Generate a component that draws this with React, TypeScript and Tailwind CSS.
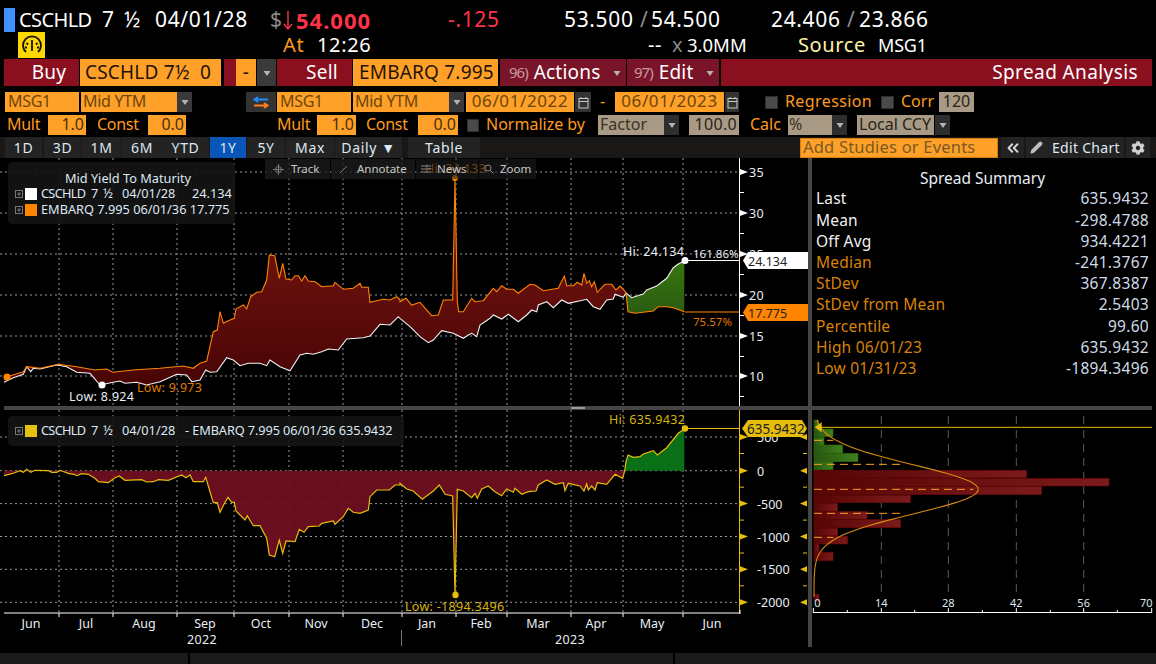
import { ChevronsLeft, Pencil } from "lucide-react"
import { FaCog } from "react-icons/fa"

type Pt = [number, number]

// all series are read off the 3x crops: x = offset + zx / 3, y = top + zy / 3
const toUpper = (pts: number[][], ox: number): Pt[] => pts.map(([x, y]) => [ox + x / 3, 155 + y / 3])
const toLower = (pts: number[][], ox: number): Pt[] => pts.map(([x, y]) => [ox + x / 3, 405 + y / 3])
const line = (pts: Pt[]) => pts.map(([x, y]) => `${x.toFixed(1)},${y.toFixed(1)}`).join(" ")

const ORANGE_RED: Pt[] = [
  ...toUpper([[22,665],[70,650],[80,635],[120,640],[175,628],[230,635],[285,645],[320,642],[338,652],[400,645],[480,640],[550,633],[580,640],[600,625],[620,618],[640,530],[652,525],[660,470],[670,505],[685,497],[703,490],[708,462],[730,450],[740,462],[752,425],[770,412],[785,410],[800,375],[808,300],[824,302],[838,370],[848,325],[858,372],[875,375],[885,362],[895,362],[905,378],[915,362],[925,378],[945,380],[965,395],[1000,392],[1005,382],[1030,403],[1060,400],[1080,385],[1085,397],[1105,397],[1110,442],[1130,437],[1150,433],[1170,435],[1190,425],[1200,435]], 0),
  ...toUpper([[0,440],[18,430],[35,450],[60,442],[95,482],[115,480],[130,435],[158,435],[165,70],[172,440],[176,470],[190,470],[215,430],[225,440],[250,437],[280,400],[290,410],[305,392],[320,403],[340,403],[355,415],[390,388],[405,390],[430,407],[475,400],[493,363],[500,392],[520,392],[532,382],[545,390],[552,355],[560,385],[568,377],[575,395],[583,380],[592,412],[615,388],[635,388],[648,405],[660,393],[672,405],[678,414]], 400),
]
const ORANGE_GREEN: Pt[] = toUpper([[678,414],[684,470],[705,475],[760,468],[775,455],[800,455],[820,458],[853,470]], 400)
const WHITE_RED: Pt[] = [
  ...toUpper([[12,682],[40,668],[70,658],[80,635],[92,650],[100,640],[120,642],[170,630],[200,635],[230,652],[270,655],[300,690],[340,682],[360,678],[375,685],[410,682],[440,690],[480,680],[530,658],[560,660],[575,680],[600,675],[617,645],[630,652],[650,650],[680,608],[700,615],[720,632],[745,625],[780,625],[800,632],[810,615],[840,635],[870,647],[900,600],[920,595],[940,598],[965,590],[985,582],[1015,585],[1040,552],[1090,548],[1110,543],[1140,508],[1170,510],[1195,485]], 0),
  ...toUpper([[0,490],[30,515],[60,545],[85,563],[100,555],[125,527],[160,535],[190,550],[205,540],[215,535],[230,545],[240,510],[270,490],[280,480],[305,492],[325,478],[355,500],[380,480],[395,465],[410,470],[415,450],[440,440],[460,458],[485,435],[505,445],[540,437],[560,433],[580,455],[600,463],[620,435],[640,432],[645,418],[670,427],[678,414]], 400),
]
const WHITE_GREEN: Pt[] = toUpper([[678,414],[695,428],[730,417],[740,405],[770,393],[800,370],[820,338],[835,327],[853,318]], 400)

const SPREAD_RED: Pt[] = [
  ...toLower([[12,212],[40,205],[60,197],[70,202],[80,193],[92,202],[105,196],[145,197],[155,202],[170,202],[180,196],[205,205],[222,208],[230,212],[245,206],[265,208],[285,220],[295,230],[325,233],[345,218],[358,213],[375,226],[425,224],[440,231],[460,230],[475,224],[505,226],[545,210],[558,218],[570,210],[580,230],[610,230],[617,217],[640,293],[652,293],[660,322],[675,292],[684,277],[695,292],[703,292],[708,318],[735,345],[742,332],[760,362],[780,362],[800,400],[808,450],[824,455],[838,405],[848,445],[858,408],[885,410],[898,373],[912,382],[925,365],[958,363],[965,355],[1000,348],[1005,358],[1030,335],[1045,310],[1060,322],[1080,325],[1105,315],[1110,275],[1130,255],[1168,255],[1185,240],[1200,240]], 0),
  ...toLower([[0,235],[20,252],[40,258],[67,283],[100,258],[118,240],[135,268],[158,273],[165,570],[172,253],[190,258],[215,278],[225,265],[232,280],[245,252],[265,243],[285,260],[305,272],[320,252],[340,262],[345,250],[365,268],[385,260],[408,258],[415,240],[440,225],[465,238],[490,233],[495,257],[505,235],[540,243],[552,258],[560,237],[565,255],[575,243],[585,255],[592,233],[620,238],[645,208],[668,220],[674,197]], 400),
]
const SPREAD_GREEN: Pt[] = toLower([[674,197],[678,170],[684,150],[700,157],[720,155],[730,147],[760,137],[772,150],[800,128],[835,85],[853,72]], 400)

const V_GRID = [59, 113, 177, 234, 289, 343, 402, 456, 507, 571, 623, 683]
const UPPER_TICKS = [
  { y: 172, label: "35" },
  { y: 213, label: "30" },
  { y: 254, label: "25" },
  { y: 295, label: "20" },
  { y: 336, label: "15" },
  { y: 376, label: "10" },
]
const LOWER_TICKS = [
  { y: 437, label: "500" },
  { y: 470.7, label: "0" },
  { y: 503.6, label: "-500" },
  { y: 536.5, label: "-1000" },
  { y: 569.3, label: "-1500" },
  { y: 602.3, label: "-2000" },
]
const MONTHS: [string, number][] = [["Jun", 31], ["Jul", 86], ["Aug", 144], ["Sep", 205], ["Oct", 261], ["Nov", 316], ["Dec", 372], ["Jan", 427], ["Feb", 481], ["Mar", 538], ["Apr", 596], ["May", 652], ["Jun", 712]]
const BARS_GREEN = [[55, 45, 70], [99, 72, 95], [72, 97, 120], [128, 120, 144], [174, 145, 170], [99, 171, 194]]
const BARS_RED = [[680, 196, 218], [927, 220, 243], [725, 245, 269], [332, 271, 293], [113, 295, 318], [201, 320, 342], [302, 344, 368], [113, 370, 392], [143, 394, 417], [57, 418, 440], [99, 442, 467], [57, 568, 588]]
const SUMMARY = [
  { label: "Last", value: "635.9432", tone: "text-[#f0f0f0]" },
  { label: "Mean", value: "-298.4788", tone: "text-[#f0f0f0]" },
  { label: "Off Avg", value: "934.4221", tone: "text-[#f0f0f0]" },
  { label: "Median", value: "-241.3767", tone: "text-[#d98209]" },
  { label: "StDev", value: "367.8387", tone: "text-[#d98209]" },
  { label: "StDev from Mean", value: "2.5403", tone: "text-[#d98209]" },
  { label: "Percentile", value: "99.60", tone: "text-[#d98209]" },
  { label: "High 06/01/23", value: "635.9432", tone: "text-[#d98209]" },
  { label: "Low 01/31/23", value: "-1894.3496", tone: "text-[#d98209]" },
]
const TABS = [
  { label: "1D", cls: "w-[37px] bg-[#232323]" },
  { label: "3D", cls: "w-[37px] ml-[2px] bg-[#232323]" },
  { label: "1M", cls: "w-[39px] ml-[1px] bg-[#232323]" },
  { label: "6M", cls: "w-[40px] ml-[1px] bg-[#232323]" },
  { label: "YTD", cls: "w-[47px] bg-[#232323]" },
  { label: "1Y", cls: "w-[36px] ml-[1px] bg-[#0a56b8]" },
  { label: "5Y", cls: "w-[38px] ml-[1px] bg-[#232323]" },
  { label: "Max", cls: "w-[48px] ml-[1px] bg-[#232323]" },
  { label: "Daily ▼", cls: "w-[67px] ml-[1px] bg-[#232323]" },
  { label: "Table", cls: "w-[72px] ml-[6px] bg-[#232323]" },
]

const gauss = Array.from({ length: 61 }, (_, i) => {
  const zy = 45 + (i * 530) / 60
  const zx = 42 + 493 * Math.exp(-((zy - 253) ** 2) / (2 * 73.5 * 73.5))
  return [800 + zx / 3, 405 + zy / 3] as Pt
})

function Arrow() {
  return (
    <svg width="12" height="12" viewBox="0 0 12 12">
      <path d="M2.5 4 9.5 4 6 9Z" fill="#b5b5b5" />
    </svg>
  )
}

function Drop({ className }: { className: string }) {
  return (
    <div className={`flex items-center justify-center ${className}`}>
      <Arrow />
    </div>
  )
}

function Cal({ className }: { className: string }) {
  return (
    <div className={`flex items-center justify-center bg-[#333] ${className}`}>
      <svg width="11" height="13" viewBox="0 0 11 13" fill="none" stroke="#c9c9c9">
        <rect x="1" y="2.5" width="9" height="9.5" />
        <path d="M1 5.5h9M3 1v2M8 1v2" />
      </svg>
    </div>
  )
}

function Check({ className }: { className: string }) {
  return <div className={`h-[13px] bg-[#4a4a4a] border border-[#2e2e2e] ${className}`} />
}

function Expand() {
  return (
    <svg width="8" height="8" viewBox="0 0 8 8" fill="none" stroke="#777" className="ml-[7px] shrink-0">
      <rect x="0.5" y="0.5" width="7" height="7" />
      <path d="M2 4h4M4 2v4" />
    </svg>
  )
}

function Bond() {
  return (
    <>
      <span className="w-[50px] tracking-[-0.7px]">CSCHLD</span>
      <span className="w-[12px]">7</span>
      <span className="w-[19px]">½</span>
      <span className="w-[63px]">04/01/28</span>
    </>
  )
}

function UpperChart() {
  return (
    <div className="relative w-[808px] h-[248px] shrink-0">
      <svg width="808" height="248" viewBox="0 158 808 248" className="block tracking-[0.3px]">
        <defs>
          <linearGradient id="upRed" gradientUnits="userSpaceOnUse" x1="0" y1="250" x2="0" y2="390">
            <stop offset="0" stopColor="#6d1210" />
            <stop offset="1" stopColor="#470404" />
          </linearGradient>
          <linearGradient id="upGreen" gradientUnits="userSpaceOnUse" x1="0" y1="262" x2="0" y2="312">
            <stop offset="0" stopColor="#37760f" />
            <stop offset="1" stopColor="#2b5c10" />
          </linearGradient>
        </defs>
        <g stroke="#9a9a9a" strokeDasharray="2 3" strokeWidth="1">
          {UPPER_TICKS.map((t) => <line key={t.y} x1="0" x2="739" y1={t.y} y2={t.y} />)}
          {V_GRID.map((x) => <line key={x} x1={x} x2={x} y1="158" y2="405" />)}
        </g>
        <polygon points={line([...ORANGE_RED, ...[...WHITE_RED].reverse()])} fill="url(#upRed)" />
        <polygon points={line([...ORANGE_GREEN, ...[...WHITE_GREEN].reverse()])} fill="url(#upGreen)" />
        <polyline points={line(WHITE_RED.concat(WHITE_GREEN))} fill="none" stroke="#f2f2f2" strokeWidth="1.1" />
        <polyline points={line(ORANGE_RED.concat(ORANGE_GREEN))} fill="none" stroke="#ff8400" strokeWidth="1.1" />
        <line x1="685" x2="740" y1="260.5" y2="260.5" stroke="#fff" />
        <line x1="685" x2="740" y1="312" y2="312" stroke="#ff8400" />
        <circle cx="7" cy="377" r="3.5" fill="#ff8400" />
        <circle cx="102" cy="385" r="3.5" fill="#fff" />
        <circle cx="685" cy="260.5" r="3.5" fill="#fff" />
        <circle cx="455" cy="178" r="3" fill="#ff8400" />
        <line x1="739.5" x2="739.5" y1="158" y2="406" stroke="#fff" />
        {UPPER_TICKS.map((t) => (
          <g key={t.y}>
            <path d={`M740 ${t.y - 3}L748 ${t.y}L740 ${t.y + 3}Z`} fill="#fff" />
            <text x="749" y={t.y + 5} fontSize="12.5" fill="#e8eef5">{t.label}</text>
            <line x1="740" x2="744" y1={t.y + 20.5} y2={t.y + 20.5} stroke="#fff" />
          </g>
        ))}
        <g fontSize="12.5">
          <text x="69" y="400.5" fill="#e8eef5">Low: 8.924</text>
          <text x="137" y="391.5" fill="#e07a00">Low: 9.973</text>
          <text x="425" y="172.5" fill="#e07a00">Hi: 34.133</text>
          <text x="623" y="255.5" fill="#e8eef5">Hi: 24.134</text>
          <text x="693" y="257.5" fill="#e8eef5" fontSize="11.5" letterSpacing="0">161.86%</text>
          <text x="693" y="325.5" fill="#e07a00" fontSize="11.5" letterSpacing="0">75.57%</text>
        </g>
        <path d="M743 260.5L748 252H808V269H748Z" fill="#fff" />
        <path d="M743 312.5L748 304H808V321H748Z" fill="#ff8400" />
        <text x="748" y="265.5" fontSize="12.5" fill="#222" letterSpacing="0">24.134</text>
        <text x="748" y="317.5" fontSize="12.5" fill="#222" letterSpacing="0">17.775</text>
      </svg>

      <div className="absolute left-[8px] top-[4px] w-[227px] h-[62px] rounded bg-[#141414]/90 text-[12.75px] tracking-normal text-[#dfe8f2]">
        <div className="h-[20px] pt-[9px] pl-[13px] text-center leading-[14px]">Mid Yield To Maturity</div>
        <div className="flex items-center h-[16px] mt-[4px] whitespace-pre">
          <Expand />
          <div className="ml-[2px] w-[12px] h-[12px] shrink-0 bg-white" />
          <span className="ml-[4px] flex"><Bond /><span className="ml-[7px]">24.134</span></span>
        </div>
        <div className="flex items-center h-[16px] whitespace-pre">
          <Expand />
          <div className="ml-[2px] w-[12px] h-[12px] shrink-0 bg-[#ff8400]" />
          <span className="ml-[4px]">EMBARQ 7.995 06/01/36 17.775</span>
        </div>
      </div>

      <div className="absolute left-[265px] top-[1px] h-[20px] flex text-[11.5px] tracking-normal text-[#c8c8c8] leading-[20px]">
        <div className="w-[65px] bg-[#1c1c1c]/80 flex items-center pl-[8px] gap-[7px]">
          <svg width="11" height="11" viewBox="0 0 11 11" fill="none" stroke="#777"><circle cx="5.5" cy="5.5" r="3" /><path d="M5.5 0v11M0 5.5h11" /></svg>
          Track
        </div>
        <div className="w-[84px] ml-[1px] bg-[#1c1c1c]/80 flex items-center pl-[8px] gap-[8px]">
          <svg width="10" height="10" viewBox="0 0 10 10" stroke="#777"><path d="M1 9 8 2" /></svg>
          Annotate
        </div>
        <div className="w-[62px] ml-[1px] bg-[#1c1c1c]/60 flex items-center pl-[5px] gap-[6px]">
          <svg width="10" height="10" viewBox="0 0 10 10" stroke="#888"><path d="M0 2h10M0 5h10M0 8h10" /></svg>
          News
        </div>
        <div className="w-[57px] ml-[1px] bg-[#1c1c1c]/60 flex items-center pl-[5px] gap-[6px]">
          <svg width="10" height="10" viewBox="0 0 10 10" fill="none" stroke="#888"><circle cx="4" cy="4" r="3" /><path d="M6.5 6.5 9.5 9.5" /></svg>
          Zoom
        </div>
      </div>
    </div>
  )
}

function LowerChart() {
  return (
    <div className="relative w-[808px] h-[243px] shrink-0">
      <svg width="808" height="243" viewBox="0 410 808 243" className="block tracking-[0.3px]">
        <g stroke="#9a9a9a" strokeDasharray="2 3" strokeWidth="1">
          {LOWER_TICKS.map((t) => <line key={t.y} x1="0" x2="739" y1={t.y} y2={t.y} />)}
          {V_GRID.map((x) => <line key={x} x1={x} x2={x} y1="410" y2="613" />)}
        </g>
        <polygon points={line([...SPREAD_RED, [624.7, 470.7], [4, 470.7]])} fill="#6e0f20" fillOpacity="0.94" />
        <polygon points={line([...SPREAD_GREEN, [684.3, 470.7]])} fill="#0a7018" />
        <polyline points={line(SPREAD_RED.concat(SPREAD_GREEN))} fill="none" stroke="#e6bd0a" strokeWidth="1.2" />
        <line x1="685" x2="740" y1="428.5" y2="428.5" stroke="#e6bd0a" />
        <circle cx="685" cy="428.5" r="3.2" fill="#e6bd0a" />
        <circle cx="455.5" cy="595" r="3.2" fill="#e6bd0a" />
        <line x1="739.5" x2="739.5" y1="410" y2="613" stroke="#e6bd0a" />
        {LOWER_TICKS.map((t) => (
          <g key={t.y}>
            <path d={`M740 ${t.y - 3}L748 ${t.y}L740 ${t.y + 3}Z`} fill="#e6bd0a" />
            <path d={`M807 ${t.y - 3}L800 ${t.y}L807 ${t.y + 3}Z`} fill="#e6bd0a" />
            <text x="757" y={t.y + 5} fontSize="12.5" fill="#e8eef5" letterSpacing="0">{t.label}</text>
            {t.label !== "-2000" && (
              <>
                <line x1="740" x2="744" y1={t.y + 16.5} y2={t.y + 16.5} stroke="#e6bd0a" />
                <line x1="803" x2="807" y1={t.y + 16.5} y2={t.y + 16.5} stroke="#e6bd0a" />
              </>
            )}
          </g>
        ))}
        <path d="M742 428.5L748 420H802L807 428.5L802 437H748Z" fill="#e6bd0a" />
        <text x="747" y="433.5" fontSize="13.5" fill="#222" letterSpacing="0">635.9432</text>
        <text x="609" y="423.5" fontSize="12.5" fill="#d8b40a">Hi: 635.9432</text>
        <text x="405" y="610.5" fontSize="12.5" fill="#d8b40a">Low: -1894.3496</text>
        <line x1="4" x2="740" y1="613" y2="613" stroke="#fff" />
        {V_GRID.map((x) => <line key={x} x1={x} x2={x} y1="613" y2="617" stroke="#fff" />)}
        <line x1="740" x2="740" y1="610" y2="614" stroke="#fff" />
        {MONTHS.map(([m, x], i) => (
          <text key={i} x={x} y="628" fontSize="12.5" fill="#e8eef5" textAnchor="middle" letterSpacing="0">{m}</text>
        ))}
        <text x="202" y="644" fontSize="12.5" fill="#e8eef5" textAnchor="middle">2022</text>
        <text x="570" y="644" fontSize="12.5" fill="#e8eef5" textAnchor="middle">2023</text>
        <line x1="401.5" x2="401.5" y1="630" y2="646" stroke="#777" />
      </svg>

      <div className="absolute left-[8px] top-[6px] w-[396px] h-[30px] rounded bg-[#141414]/90 flex items-center text-[12.75px] tracking-normal text-[#dfe8f2] whitespace-pre">
        <Expand />
        <div className="ml-[2px] w-[12px] h-[12px] shrink-0 bg-[#e6c20c]" />
        <span className="ml-[4px] flex"><Bond /><span className="tracking-[-0.1px]">- EMBARQ 7.995 06/01/36 635.9432</span></span>
      </div>
    </div>
  )
}

function Histogram() {
  const hx = (z: number) => 800 + z / 3
  const hy = (z: number) => 405 + z / 3
  return (
    <svg width="344" height="243" viewBox="812 410 344 243" className="block tracking-normal">
      <defs>
        <linearGradient id="barRed" x1="0" y1="0" x2="1" y2="0">
          <stop offset="0" stopColor="#570505" />
          <stop offset="1" stopColor="#7c1b1b" />
        </linearGradient>
        <linearGradient id="barGreen" x1="0" y1="0" x2="1" y2="0">
          <stop offset="0" stopColor="#275510" />
          <stop offset="1" stopColor="#3f7f1c" />
        </linearGradient>
      </defs>
      {[244, 445, 649, 851].map((z) => (
        <line key={z} x1={hx(z)} x2={hx(z)} y1={hy(33)} y2={hy(575)} stroke="#5a5a5a" strokeDasharray="8 6" />
      ))}
      {BARS_GREEN.map(([r, t, b]) => (
        <rect key={t} x={hx(42)} y={hy(t)} width={(r - 42) / 3} height={(b - t) / 3} fill="url(#barGreen)" stroke="#2f6a12" strokeWidth="0.6" />
      ))}
      {BARS_RED.map(([r, t, b]) => (
        <rect key={t} x={hx(42)} y={hy(t)} width={(r - 42) / 3} height={(b - t) / 3} fill="url(#barRed)" stroke="#6e0707" strokeWidth="0.6" />
      ))}
      {[[106, 100], [178, 305], [253, 520], [325, 305], [397, 100]].map(([y, r]) => (
        <line key={y} x1={hx(42)} x2={hx(r)} y1={hy(y)} y2={hy(y)} stroke="#ffa020" strokeDasharray="8 5" />
      ))}
      <polyline points={line(gauss)} fill="none" stroke="#d98a10" strokeWidth="1.1" />
      <line x1={hx(60)} x2="1152" y1={hy(67)} y2={hy(67)} stroke="#e6bd0a" />
      <path d={`M${hx(44)} ${hy(67)}L${hx(65)} ${hy(52)}V${hy(82)}Z`} fill="#e6bd0a" />
      {["0", "14", "28", "42", "56", "70"].map((t, i) => (
        <text key={t} x={hx([52, 244, 445, 649, 851, 1039][i])} y="607" fontSize="11" fill="#dfe8f2" textAnchor="middle">{t}</text>
      ))}
      <line x1={hx(40)} x2={hx(1055)} y1="612.5" y2="612.5" stroke="#fff" />
      {[40, 244, 445, 649, 851, 1055].map((z) => (
        <line key={z} x1={hx(z)} x2={hx(z)} y1="608" y2="613" stroke="#fff" />
      ))}
      {[142, 344, 547, 751, 952].map((z) => (
        <line key={z} x1={hx(z)} x2={hx(z)} y1="610" y2="613" stroke="#fff" />
      ))}
    </svg>
  )
}

export default function App() {
  return (
    <div className="w-[1156px] h-[664px] overflow-hidden bg-black text-white font-['Noto_Sans',sans-serif] tracking-[0.64px]">
      <div className="flex items-center h-[32px] pt-[8px] text-[21px] whitespace-pre">
        <div className="ml-[4px] w-[11px] h-[24px] bg-[#3f92ff]" />
        <span className="ml-[4px] w-[83px] text-[20px] tracking-[-0.6px]">CSCHLD</span>
        <span className="w-[22px]">7</span>
        <span className="w-[31px]">½</span>
        <span className="w-[115px]">04/01/28</span>
        <span className="text-[#8c8c8c] w-[13px]">$</span>
        <div className="w-[13px] flex">
          <svg width="10" height="22" viewBox="0 0 10 22" fill="none" stroke="#ff3348" strokeWidth="1.4">
            <path d="M5 2v18M1 15l4 5 4-5" />
          </svg>
        </div>
        <span className="text-[#ff3348] font-bold text-[22px] tracking-[1px] w-[152px]">54.000</span>
        <span className="text-[#ff3348] w-[116px]">-.125</span>
        <span className="w-[76px]">53.500</span>
        <span className="text-[#8c8c8c] w-[11px]">/</span>
        <span className="w-[120px]">54.500</span>
        <span className="w-[76px]">24.406</span>
        <span className="text-[#8c8c8c] w-[12px]">/</span>
        <span>23.866</span>
      </div>

      <div className="flex items-center h-[26px] text-[20px] whitespace-pre">
        <div className="ml-[18px] w-[27px] h-[26px] bg-[#ffd800] flex items-center justify-center">
          <svg width="22" height="22" viewBox="0 0 22 22" fill="none" stroke="#111" strokeWidth="1.8">
            <path d="M5 18A9 9 0 1 1 17 18" />
            <path d="M11 6v11M5.5 9l1.5 1.5M16.5 9 15 10.5M4 13.5h2M16 13.5h2" />
          </svg>
        </div>
        <span className="ml-[238px] w-[34px] text-[#ff9a1f]">At</span>
        <span className="w-[331px]">12:26</span>
        <span className="w-[24px]">--</span>
        <span className="w-[15px] text-[#8c8c8c]">x</span>
        <span className="w-[111px] text-[18.5px] tracking-normal">3.0MM</span>
        <span className="w-[80px] text-[#fff2a8]">Source</span>
        <span className="text-[18px] tracking-[-0.2px]">MSG1</span>
      </div>

      <div className="flex h-[27px] mt-[1px] text-[19px] tracking-[0.2px] whitespace-pre">
        <div className="ml-[4px] w-[75px] bg-[#8a0f1f] flex items-center justify-center pl-[15px]">Buy</div>
        <div className="ml-[1px] w-[141px] bg-[#ffa028] text-[#1e1405] flex items-center pl-[5px]">CSCHLD 7½  0</div>
        <div className="ml-[3px] w-[12px] bg-[#8a0f1f]" />
        <div className="w-[20px] bg-[#ffa028] text-[#1e1405] flex items-center justify-center">-</div>
        <Drop className="ml-[1px] w-[19px] bg-[#3a3a3a]" />
        <div className="ml-[1px] w-[75px] bg-[#8a0f1f] flex items-center justify-center pl-[15px]">Sell</div>
        <div className="ml-[1px] w-[145px] bg-[#ffa028] text-[#1e1405] flex items-center pl-[6px]">EMBARQ 7.995</div>
        <div className="ml-[2px] w-[126px] bg-[#7a1428] flex items-center pl-[9px] gap-[6px]">
          <span className="text-[#c99aa5] text-[15px] tracking-[-1px]">96)</span>
          <span>Actions</span>
          <span className="ml-[5px] flex"><Arrow /></span>
        </div>
        <div className="ml-[1px] w-[92px] bg-[#7a1428] flex items-center pl-[7px] gap-[6px]">
          <span className="text-[#c99aa5] text-[15px] tracking-[-1px]">97)</span>
          <span>Edit</span>
          <span className="ml-[5px] flex"><Arrow /></span>
        </div>
        <div className="ml-[2px] w-[431px] bg-[#8a0f1f] flex items-center justify-end pr-[14px] tracking-[0.4px]">Spread Analysis</div>
      </div>

      <div className="flex items-center h-[20px] mt-[6px] pl-[5px] text-[16px] tracking-normal text-[#ff9a1f] whitespace-pre [&>span]:mb-[2px]">
        <div className="w-[74px] h-full bg-[#ffa028] text-[#6b4508] pl-[3px] leading-[18px] tracking-[-0.3px]">MSG1</div>
        <div className="ml-[2px] w-[96px] h-full bg-[#ffa028] text-[#6b4508] pl-[2px] leading-[18px] tracking-[-0.3px]">Mid YTM</div>
        <Drop className="w-[15px] h-full bg-[#3a3a3a]" />
        <div className="ml-[54px] w-[30px] h-full bg-[#333] flex items-center justify-center">
          <svg width="18" height="13" viewBox="0 0 18 13" fill="none" strokeWidth="2">
            <path d="M16 3.5H3M6 1 2.5 3.5 6 6" stroke="#1f8bff" />
            <path d="M2 9.5h13M12 7l3.5 2.5L12 12" stroke="#ff7a1a" />
          </svg>
        </div>
        <div className="ml-[1px] w-[74px] h-full bg-[#ffa028] text-[#6b4508] pl-[3px] leading-[18px] tracking-[-0.3px]">MSG1</div>
        <div className="ml-[2px] w-[96px] h-full bg-[#ffa028] text-[#6b4508] pl-[2px] leading-[18px] tracking-[-0.3px]">Mid YTM</div>
        <Drop className="w-[15px] h-full bg-[#3a3a3a]" />
        <div className="ml-[2px] w-[108px] h-full bg-[#ffa028] text-[#6b4508] text-[17px] tracking-[0.6px] text-center leading-[18px]">06/01/2022</div>
        <Cal className="ml-[1px] w-[16px] h-full" />
        <span className="ml-[9px] w-[7px]">-</span>
        <div className="ml-[8px] w-[109px] h-full bg-[#ffa028] text-[#6b4508] text-[17px] tracking-[0.6px] text-center leading-[18px]">06/01/2023</div>
        <Cal className="ml-[1px] w-[14px] h-full" />
        <Check className="ml-[26px] w-[13px]" />
        <span className="ml-[7px] w-[87px] tracking-[0.4px]">Regression</span>
        <Check className="ml-[9px] w-[13px]" />
        <span className="ml-[7px] w-[32px]">Corr</span>
        <div className="ml-[6px] w-[35px] h-full bg-[#a89a84] text-[#2a241a] text-center leading-[18px]">120</div>
      </div>

      <div className="flex items-center h-[20px] mt-[3px] text-[16px] tracking-normal text-[#ff9a1f] whitespace-pre [&>span]:mb-[2px]">
        <span className="ml-[7px] w-[32px] tracking-[-0.3px]">Mult</span>
        <div className="ml-[9px] w-[38px] h-full bg-[#ffa028] text-[#4a3006] text-right pr-[2px] leading-[18px]">1.0</div>
        <span className="ml-[11px] w-[43px] tracking-[-0.3px]">Const</span>
        <div className="ml-[8px] w-[38px] h-full bg-[#ffa028] text-[#4a3006] text-right pr-[2px] leading-[18px]">0.0</div>
        <span className="ml-[91px] w-[31px] tracking-[-0.3px]">Mult</span>
        <div className="ml-[9px] w-[39px] h-full bg-[#ffa028] text-[#4a3006] text-right pr-[2px] leading-[18px]">1.0</div>
        <span className="ml-[10px] w-[44px] tracking-[-0.3px]">Const</span>
        <div className="ml-[8px] w-[40px] h-full bg-[#ffa028] text-[#4a3006] text-right pr-[2px] leading-[18px]">0.0</div>
        <Check className="ml-[9px] w-[12px]" />
        <span className="ml-[7px] w-[104px]">Normalize by</span>
        <div className="ml-[8px] w-[66px] h-full bg-[#a89a84] text-[#3a3226] pl-[2px] leading-[18px]">Factor</div>
        <Drop className="w-[15px] h-full bg-[#2e2e2e]" />
        <div className="ml-[10px] w-[50px] h-full bg-[#a89a84] text-[#2a241a] text-right pr-[2px] leading-[18px] tracking-[0.3px]">100.0</div>
        <span className="ml-[11px] w-[32px]">Calc</span>
        <div className="ml-[6px] w-[44px] h-full bg-[#a89a84] text-[#3a3226] pl-[1px] leading-[18px]">%</div>
        <Drop className="w-[15px] h-full bg-[#2e2e2e]" />
        <div className="ml-[10px] w-[77px] h-full bg-[#a89a84] text-[#2a241a] pl-[2px] leading-[18px]">Local CCY</div>
        <Drop className="ml-[1px] w-[15px] h-full bg-[#2e2e2e]" />
      </div>

      <div className="flex items-center h-[21px] mt-[2px] pl-[5px] bg-[#1a1816] text-[14px] text-[#dfe8f2] whitespace-pre">
        {TABS.map((t) => (
          <div key={t.label} className={`h-full flex items-center justify-center ${t.cls}`}>{t.label}</div>
        ))}
        <div className="ml-[320px] w-[198px] h-[20px] bg-[#ffa028] border border-[#d87c10] text-[16.5px] tracking-[0.2px] text-[#7a5a22] pl-[2px] leading-[16px]">Add Studies or Events</div>
        <div className="ml-[3px] w-[23px] h-full bg-[#232323] flex items-center justify-center"><ChevronsLeft size={18} strokeWidth={2.5} color="#d8d8d8" /></div>
        <div className="ml-[2px] w-[98px] h-full bg-[#232323] flex items-center justify-center gap-[5px] tracking-[0.3px]"><Pencil size={13} fill="#bdbdbd" color="#bdbdbd" /> Edit Chart</div>
        <div className="ml-[2px] w-[24px] h-full bg-[#232323] flex items-center justify-center"><FaCog size={14} color="#d0d0d0" /></div>
      </div>

      <div className="flex h-[248px]">
        <UpperChart />
        <div className="w-[4px] bg-[#454545]" />
        <div className="flex-1 pl-[4px] pr-[7px] pt-[10px] text-[15.5px]">
          <div className="h-[20.4px] text-center leading-[20px] text-[#e8eef5] tracking-normal">Spread Summary</div>
          {SUMMARY.map((row) => (
            <div key={row.label} className="flex justify-between h-[21.2px] leading-[21px]">
              <span className={`tracking-[0.2px] ${row.tone}`}>{row.label}</span>
              <span className="text-[#cfdae6] tracking-[0.3px]">{row.value}</span>
            </div>
          ))}
        </div>
      </div>

      <div className="relative h-[4px] mx-[4px] bg-[#454545]">
        <div className="absolute left-[567px] top-[1px] w-[14px] h-[2px] border-y border-[#999]" />
      </div>

      <div className="flex h-[243px]">
        <LowerChart />
        <div className="w-[4px] h-[237px] bg-[#454545]" />
        <Histogram />
      </div>

      <div className="flex h-[11px] bg-[#1a1a1a]">
        <div className="w-[188px]" />
        <div className="w-[2px] bg-black" />
        <div className="w-[483px]" />
        <div className="w-[2px] bg-black" />
      </div>
    </div>
  )
}
